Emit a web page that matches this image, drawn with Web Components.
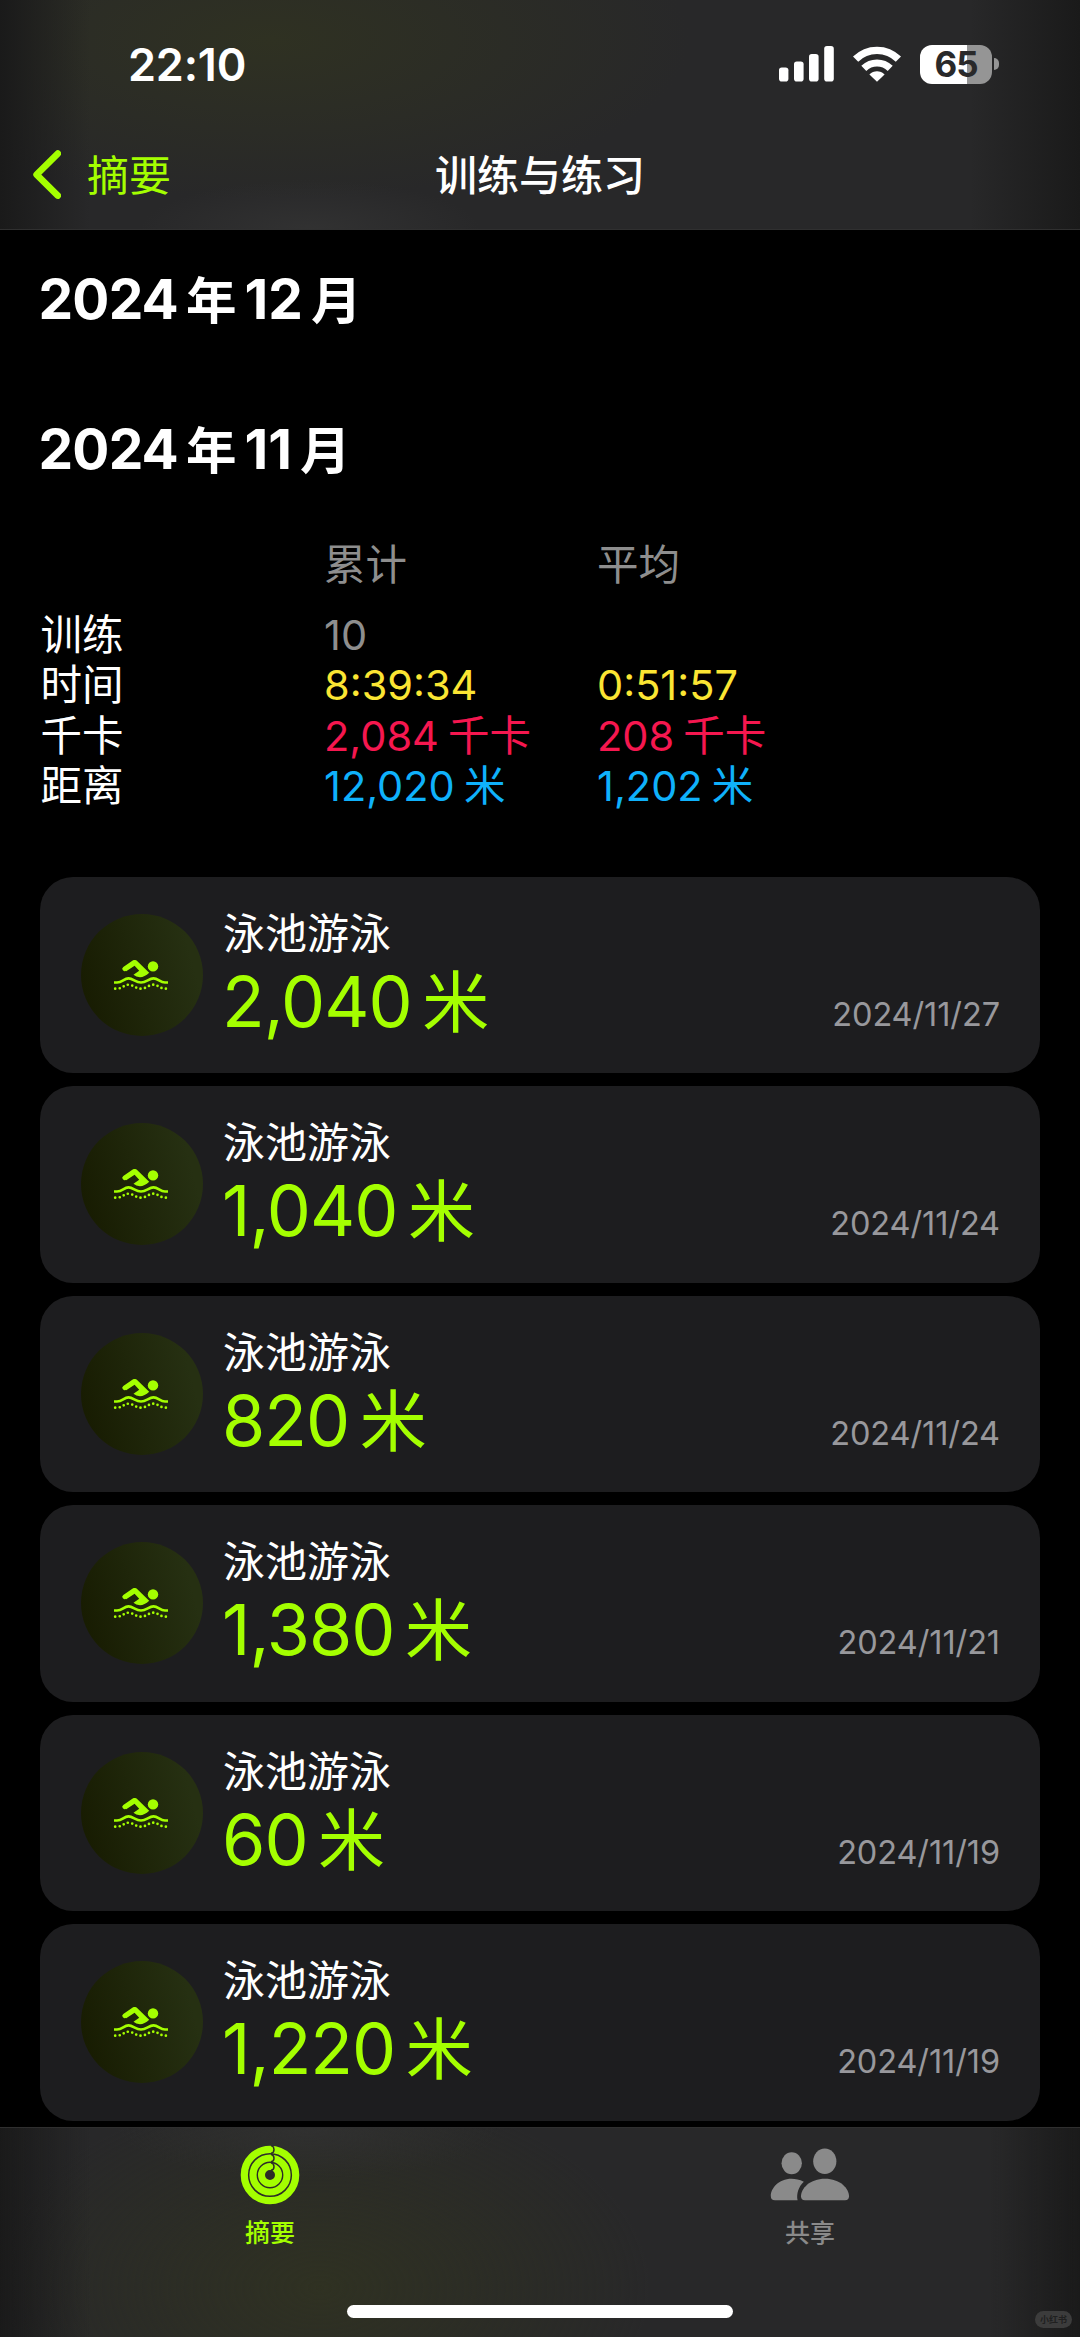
<!DOCTYPE html>
<html lang="zh-CN">
  <head>
    <meta charset="UTF-8" />
    <meta name="viewport" content="width=device-width, initial-scale=1.0" />
    <title>训练与练习</title>
    <style>
      body {
        margin: 0;
        background: #000;
        color: #fff;
        font-family: Inter, "Noto Sans CJK SC", sans-serif;
      }
    </style>
  </head>

  <body>
    <workout-app>
      <status-bar slot="top" time="22:10" level="65"></status-bar>
      <nav-bar slot="top" back="摘要">训练与练习</nav-bar>

      <month-title year="2024" month="12"></month-title>
      <month-title year="2024" month="11"></month-title>
      <month-summary>
        <summary-row head total="累计" average="平均"></summary-row>
        <summary-row total="10" color="#8e8e8e">训练</summary-row>
        <summary-row total="8:39:34" average="0:51:57" color="#fbe533">时间</summary-row>
        <summary-row total="2,084 千卡" average="208 千卡" color="#f5174f">千卡</summary-row>
        <summary-row total="12,020 米" average="1,202 米" color="#0fb1fb">距离</summary-row>
      </month-summary>
      <workout-list>
        <workout-card distance="2,040" date="2024/11/27">泳池游泳</workout-card>
        <workout-card distance="1,040" date="2024/11/24">泳池游泳</workout-card>
        <workout-card distance="820" date="2024/11/24">泳池游泳</workout-card>
        <workout-card distance="1,380" date="2024/11/21">泳池游泳</workout-card>
        <workout-card distance="60" date="2024/11/19">泳池游泳</workout-card>
        <workout-card distance="1,220" date="2024/11/19">泳池游泳</workout-card>
      </workout-list>

      <tab-bar slot="bottom">
        <tab-item active>
          <rings-icon slot="icon"></rings-icon>
          摘要
        </tab-item>
        <tab-item>
          <people-icon slot="icon"></people-icon>
          共享
        </tab-item>
      </tab-bar>
    </workout-app>
  </body>

  <template id="workout-app">
    <style>
      :host {
        display: flex;
        flex-direction: column;
        width: 1080px;
        height: 2337px;
        overflow: hidden;
      }
      header {
        flex: none;
        box-sizing: border-box;
        height: 230px;
        border-bottom: 1px solid #303030;
        background:
          linear-gradient(90deg, #1a1a1a 0, rgba(26, 26, 26, 0) 90px, rgba(26, 26, 26, 0) 970px, #1a1a1a 1080px),
          radial-gradient(170px 50px at 310px 230px, rgba(52, 52, 52, 0.8), transparent),
          radial-gradient(420px 160px at 270px 40px, #2f3122, rgba(45, 48, 35, 0)),
          #282829;
      }
      main {
        flex: 1;
        min-height: 0;
        padding: 36px 40px 0;
      }
      footer {
        flex: none;
      }
    </style>
    <header><slot name="top"></slot></header>
    <main><slot></slot></main>
    <footer><slot name="bottom"></slot></footer>
  </template>

  <template id="status-bar">
    <style>
      :host {
        display: flex;
        align-items: center;
        justify-content: space-between;
        box-sizing: border-box;
        height: 128px;
        padding: 0 81px 0 128px;
      }
      .time {
        font-size: 45px;
        font-weight: 600;
        line-height: 50px;
        letter-spacing: -0.2px;
        padding-top: 1px;
      }
      .icons {
        display: flex;
        align-items: center;
      }
      .signal {
        margin-right: 19px;
      }
      .wifi {
        margin-right: 19px;
      }
      .battery {
        width: 72px;
        height: 39px;
        border-radius: 12px;
        background: linear-gradient(90deg, #fff 65%, #959595 65%);
        color: #29292a;
        font-size: 35px;
        font-weight: 700;
        line-height: 39px;
        text-align: center;
        letter-spacing: -1px;
      }
      .cap {
        width: 5px;
        height: 12px;
        margin-left: 2px;
        border-radius: 0 5px 5px 0;
        background: #959595;
      }
    </style>
    <span class="time"></span>
    <div class="icons">
      <svg class="signal" width="55" height="36" viewBox="0 0 55 36" fill="#fff">
        <rect x="0" y="21.5" width="9.4" height="14" rx="2.8" />
        <rect x="15" y="15.5" width="9.6" height="20" rx="2.8" />
        <rect x="30" y="8" width="9.6" height="27.5" rx="2.8" />
        <rect x="45.2" y="0" width="9.6" height="35.5" rx="2.8" />
      </svg>
      <svg class="wifi" width="48" height="36" viewBox="0 0 48 36" fill="none" stroke="#fff">
        <path d="M2.6 13.2C14.5 1.4 33.5 1.4 45.4 13.2" stroke-width="7.4" />
        <path d="M10.8 22.4C18.3 15.2 29.7 15.2 37.2 22.4" stroke-width="7.2" />
        <path d="M24 35.8L16.4 28.4C20.8 24.2 27.2 24.2 31.6 28.4Z" fill="#fff" stroke="none" />
      </svg>
      <div class="battery"></div>
      <div class="cap"></div>
    </div>
  </template>

  <template id="nav-bar">
    <style>
      :host {
        display: grid;
        grid-template-columns: 1fr auto 1fr;
        align-items: center;
        height: 94px;
        padding: 0 33px;
        font-size: 42px;
        line-height: 50px;
      }
      .back {
        display: flex;
        align-items: center;
        gap: 26px;
        color: #a4ff00;
      }
      .label {
        padding-top: 1px;
      }
      .title {
        padding-top: 1px;
        font-weight: 500;
      }
    </style>
    <div class="back">
      <svg width="28" height="50" viewBox="0 0 28 50" fill="none" stroke="#a4ff00" stroke-width="6.6" stroke-linecap="round" stroke-linejoin="round">
        <path d="M24.8 3.6L3.6 24.6L24.8 45.6" />
      </svg>
      <span class="label"></span>
    </div>
    <div class="title"><slot></slot></div>
  </template>

  <template id="month-title">
    <style>
      :host {
        display: block;
        height: 66px;
        margin: 0 0 84px -1.5px;
        font-size: 55px;
        font-weight: 700;
        line-height: 66px;
        white-space: nowrap;
      }
      .year {
        letter-spacing: -0.8px;
      }
      .unit {
        margin: 0 8px 0 8px;
        font-size: 50.5px;
      }
      .month + .unit {
        margin-left: 8px;
      }
    </style>
    <span class="year"></span><span class="unit">年</span><span class="month"></span><span class="unit">月</span>
  </template>

  <template id="month-summary">
    <style>
      :host {
        display: block;
        margin-top: -26px;
        padding-bottom: 65px;
      }
    </style>
    <slot></slot>
  </template>

  <template id="summary-row">
    <style>
      :host {
        display: grid;
        grid-template-columns: 283.5px 273px 1fr;
        height: 50.5px;
        padding-left: 0.5px;
        font-size: 41.5px;
        line-height: 50px;
        word-spacing: -2.5px;
        white-space: nowrap;
      }
      :host([head]) {
        margin-bottom: 19px;
      }
    </style>
    <span><slot></slot></span>
    <span class="total"></span>
    <span class="average"></span>
  </template>

  <template id="workout-list">
    <style>
      :host {
        display: flex;
        flex-direction: column;
        gap: 13px;
      }
    </style>
    <slot></slot>
  </template>

  <template id="workout-card">
    <style>
      :host {
        display: grid;
        grid-template-columns: 122px 1fr auto;
        column-gap: 20px;
        box-sizing: border-box;
        height: 196.5px;
        padding: 37px 40px 0 41px;
        border-radius: 33px;
        background: #1d1d1f;
      }
      .badge {
        display: flex;
        align-items: center;
        justify-content: center;
        width: 122px;
        height: 122px;
        border-radius: 50%;
        background: linear-gradient(75deg, #171b01 5%, #263012 85%);
      }
      .name {
        font-size: 42px;
        line-height: 50px;
        margin-top: -5px;
      }
      .value {
        margin: 3px 0 0 -1px;
        color: #a4ff00;
        font-size: 70px;
        line-height: 80px;
        letter-spacing: -1px;
        white-space: nowrap;
      }
      .value small {
        margin-left: 10.5px;
        font-size: 67px;
      }
      .date {
        margin-top: 81px;
        color: #98989c;
        font-size: 32.5px;
        line-height: 40px;
        letter-spacing: -0.1px;
      }
    </style>
    <div class="badge"><swim-icon></swim-icon></div>
    <div>
      <div class="name"><slot></slot></div>
      <div class="value"><span class="distance"></span><small>米</small></div>
    </div>
    <div class="date"></div>
  </template>

  <template id="swim-icon">
    <style>
      :host {
        display: block;
        height: 32px;
        padding-right: 2px;
      }
      svg {
        display: block;
      }
    </style>
    <svg width="56" height="32" viewBox="0 0 56 32" fill="#a4ff00">
      <circle cx="40" cy="7.4" r="5.2" />
      <path d="M11.2 10.2L20.5 1.6Q22 .2 23.6 1.6L36.2 13.8Q31.5 18.2 27 18.2Q23 18 20.5 15.8L26.2 11.8L21.6 6.8L13.2 12.2Z" />
      <path d="M11.6 9.8L21 3.4" stroke="#a4ff00" stroke-width="4.6" stroke-linecap="round" />
      <path d="M1 23.5H4C9.5 23.5 10.8 19.4 15.5 19.4S22.5 23.5 28 23.5S35.8 19.4 40.5 19.4S47 23.5 52 23.5H55" fill="none" stroke="#a4ff00" stroke-width="2.6" />
      <path d="M2.2 29.7H3C10 29.7 10.8 25.7 15.5 25.7S22.5 29.7 28 29.7S35.8 25.7 40.5 25.7S46 29.7 53 29.7H54" fill="none" stroke="#a4ff00" stroke-width="2.7" stroke-linecap="round" stroke-dasharray="0 4.48" />
    </svg>
  </template>

  <template id="tab-bar">
    <style>
      :host {
        display: flex;
        flex-direction: column;
        box-sizing: border-box;
        height: 210.5px;
        border-top: 1px solid #2f2f2f;
        background:
          linear-gradient(90deg, #1a1a1a 0, rgba(26, 26, 26, 0) 90px, rgba(26, 26, 26, 0) 990px, #1a1a1a 1080px),
          radial-gradient(190px 50px at 310px 0, rgba(50, 50, 50, 0.8), transparent),
          radial-gradient(330px 200px at 320px 160px, #2f3122, rgba(45, 48, 35, 0)),
          #282829;
        position: relative;
      }
      .tabs {
        display: grid;
        grid-template-columns: 1fr 1fr;
        height: 177px;
      }
      .home {
        align-self: center;
        width: 386px;
        height: 13px;
        border-radius: 7px;
        background: #fff;
      }
      .mark {
        position: absolute;
        right: 8px;
        bottom: 9px;
        width: 37px;
        height: 17px;
        border-radius: 9px;
        background: #3c3c3c;
        color: #202020;
        font-size: 9px;
        font-weight: 700;
        line-height: 17px;
        text-align: center;
      }
    </style>
    <div class="tabs"><slot></slot></div>
    <div class="home"></div>
    <span class="mark">小红书</span>
  </template>

  <template id="tab-item">
    <style>
      :host {
        display: flex;
        flex-direction: column;
        align-items: center;
        color: #8a8a8a;
        font-size: 25px;
        font-weight: 500;
        line-height: 30px;
      }
      :host([active]) {
        color: #a4ff00;
      }
      .icon {
        height: 60px;
        margin: 17.5px 0 13px;
      }
    </style>
    <div class="icon"><slot name="icon"></slot></div>
    <div><slot></slot></div>
  </template>

  <template id="rings-icon">
    <style>
      :host, svg {
        display: block;
      }
    </style>
    <svg width="60" height="60" viewBox="0 0 60 60" fill="none">
      <g stroke="#a4ff00">
        <circle cx="30" cy="30" r="25.7" stroke-width="7.2" />
        <circle cx="30" cy="30" r="17" stroke-width="7.2" />
        <circle cx="30" cy="30" r="8.5" stroke-width="7" />
      </g>
      <g stroke="#2c2e28" stroke-width="1.5">
        <path d="M31 .4Q34 1 34 4.4T31 8.2" />
        <path d="M31 9.2Q34 10 34 13.2T31 16.8" />
        <path d="M31 17.8Q34 18.5 34 21.7T31 25.3" />
      </g>
    </svg>
  </template>

  <template id="people-icon">
    <style>
      :host, svg {
        display: block;
      }
    </style>
    <svg width="80" height="60" viewBox="0 0 80 60" fill="#8a8a8a">
      <ellipse cx="21.7" cy="18.3" rx="10.2" ry="11" />
      <path d="M33.8 36.8C29.5 34.5 25.5 33.8 21.5 33.8C8.5 33.8 .8 43.5 .8 51C.8 54 2.2 55.2 5 55.2H27.6C26.2 49.5 28.5 41.5 33.8 36.8Z" />
      <ellipse cx="54.8" cy="16.2" rx="11.6" ry="12.8" />
      <path d="M55 33.8C40 33.8 31 43.5 31 51.2C31 54 32.4 55.2 35 55.2H75C77.6 55.2 79 54 79 51.2C79 43.5 70 33.8 55 33.8Z" />
    </svg>
  </template>

  <script>
    // attaches a copy of the template that has the tag's name
    class BaseElement extends HTMLElement {
      constructor() {
        super();
        const template = document.getElementById(this.localName);
        const shadowRoot = this.attachShadow({ mode: "open" });
        shadowRoot.appendChild(template.content.cloneNode(true));
      }

      fill(selector, attribute) {
        this.shadowRoot.querySelector(selector).textContent =
          this.getAttribute(attribute) || "";
      }
    }

    class StatusBar extends BaseElement {
      connectedCallback() {
        this.fill(".time", "time");
        this.fill(".battery", "level");
      }
    }

    class NavBar extends BaseElement {
      connectedCallback() {
        this.fill(".label", "back");
      }
    }

    class MonthTitle extends BaseElement {
      connectedCallback() {
        this.fill(".year", "year");
        this.fill(".month", "month");
      }
    }

    class SummaryRow extends BaseElement {
      connectedCallback() {
        this.fill(".total", "total");
        this.fill(".average", "average");
        const color = this.getAttribute("color") || "#8e8e8e";
        this.shadowRoot.querySelector(".total").style.color = color;
        this.shadowRoot.querySelector(".average").style.color = color;
      }
    }

    class WorkoutCard extends BaseElement {
      connectedCallback() {
        this.fill(".distance", "distance");
        this.fill(".date", "date");
      }
    }

    customElements.define("workout-app", class extends BaseElement {});
    customElements.define("status-bar", StatusBar);
    customElements.define("nav-bar", NavBar);
    customElements.define("month-title", MonthTitle);
    customElements.define("month-summary", class extends BaseElement {});
    customElements.define("summary-row", SummaryRow);
    customElements.define("workout-list", class extends BaseElement {});
    customElements.define("swim-icon", class extends BaseElement {});
    customElements.define("workout-card", WorkoutCard);
    customElements.define("tab-bar", class extends BaseElement {});
    customElements.define("tab-item", class extends BaseElement {});
    customElements.define("rings-icon", class extends BaseElement {});
    customElements.define("people-icon", class extends BaseElement {});
  </script>
</html>
